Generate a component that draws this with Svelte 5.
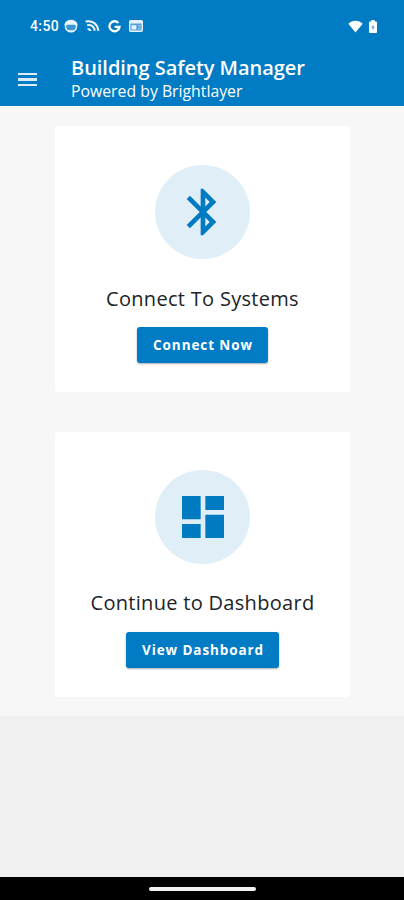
<script>
  const cards = [
    {
      title: 'Connect To Systems',
      action: 'Connect Now',
      kind: 'connect',
      icon: 'M17.71 7.71 12 2h-1v7.59L6.41 5 5 6.41 10.59 12 5 17.59 6.41 19 11 14.41V22h1l5.71-5.71-4.3-4.29 4.3-4.29zM13 5.83l1.88 1.88L13 9.59V5.83zm1.88 10.46L13 18.17v-3.76l1.88 1.88z',
    },
    {
      title: 'Continue to Dashboard',
      action: 'View Dashboard',
      kind: 'dashboard',
      icon: 'M3 13h8V3H3v10zm0 8h8v-6H3v6zm10 0h8V11h-8v10zm0-18v6h8V3h-8z',
    },
  ];
</script>

<div class="screen">
  <header>
    <div class="status">
      <span class="time">4:50</span>
      <svg class="face" width="14" height="14" viewBox="0 0 14 14">
        <circle cx="7" cy="7.2" r="5.6" fill="#3b94d3" stroke="#e9f3fc" stroke-width="1.4" />
        <path d="M.4 5.4C2-.8 12-.8 13.6 5.4L12.600 7.600 10.800 5.800H3.200L1.400 7.600z" fill="#e9f3fc" />
        <path d="M4 11.200h6L9 13H5z" fill="#e9f3fc" />
      </svg>
      <svg class="feed" width="15" height="12" viewBox="0 0 15 12" fill="none" stroke="#f1f7fd" stroke-width="2">
        <path d="M.6 1.500C7.500 0 12.500 4 13.400 10.800" />
        <path d="M2.200 5.200C6.500 4.400 9 6.500 9.800 10.800" />
        <path d="M2.600 9C4 8.400 5.600 9 6 10.600H4.600z" fill="#f1f7fd" stroke-width="1" />
      </svg>
      <svg class="google" width="13" height="13" viewBox="0 0 13 13" fill="none" stroke="#fff" stroke-width="2.4">
        <path d="M10.300 3A5 5 0 1 0 11.500 6.900H6.600" />
      </svg>
      <svg class="news" width="14" height="12" viewBox="0 0 14 12">
        <rect x=".7" y=".7" width="12.600" height="10.600" rx="1" fill="#4f9fd8" stroke="#e6f1fb" stroke-width="1.400" />
        <path d="M1 1h12v2.500H1z" fill="#e6f1fb" />
        <path d="M2.500 5.200h4.800v4.300H2.500z" fill="#e6f1fb" />
        <path d="M8.800 5.800h3M8.800 8.800h3" stroke="#b8d8f0" />
      </svg>
      <span class="spacer"></span>
      <svg class="wifi" width="15" height="13" viewBox="0 0 15 13">
        <path d="M.3 3.800C4.300-.2 10.700-.2 14.700 3.800L7.500 12.500z" fill="#fff" />
      </svg>
      <svg class="battery" width="8" height="13" viewBox="0 0 8 13">
        <path d="M2.300 0h3.400v1.400H7a1 1 0 0 1 1 1V12a1 1 0 0 1-1 1H1a1 1 0 0 1-1-1V2.400a1 1 0 0 1 1-1h1.300z" fill="#fff" />
        <path d="M4.500 4.200 2.300 7.800h1.400v2.600l2-3.600H4.400z" fill="#5a9fd6" />
      </svg>
    </div>
    <div class="toolbar">
      <button class="menu" aria-label="Menu"><i></i><i></i><i></i></button>
      <div class="titles">
        <h1>Building Safety Manager</h1>
        <p>Powered by Brightlayer</p>
      </div>
    </div>
  </header>

  <main>
    {#each cards as card}
      <section class={card.kind}>
        <div class="circle">
          <svg width="56" height="56" viewBox="0 0 24 24"><path d={card.icon} fill="#007bc1" /></svg>
        </div>
        <h2>{card.title}</h2>
        <button class="action">{card.action}</button>
      </section>
    {/each}
  </main>

  <footer><span></span></footer>
</div>

<style>
  .screen {
    width: 404px;
    height: 900px;
    display: flex;
    flex-direction: column;
    overflow: hidden;
    background: #f0f0f0;
    font-family: "Open Sans", "Noto Sans", sans-serif;
  }
  h1, h2, p { margin: 0; white-space: nowrap; }
  button { border: 0; padding: 0; font-family: inherit; }
  svg { display: block; flex: none; }
  header { height: 106px; flex: none; background: #007bc4; color: #fff; }
  .status {
    height: 52px;
    box-sizing: border-box;
    padding: 0 27px 0 30px;
    display: flex;
    align-items: center;
  }
  .time { width: 34px; font: 500 14px/20px Roboto, sans-serif; letter-spacing: .4px; }
  .feed { margin-left: 7px; }
  .google { margin-left: 8px; }
  .news { margin-left: 8px; }
  .spacer { flex: 1; }
  .battery { margin-left: 6px; }
  .toolbar { height: 53px; display: flex; align-items: center; padding-left: 18px; }
  .menu {
    width: 19px;
    height: 13px;
    margin-top: 2px;
    display: flex;
    flex-direction: column;
    justify-content: space-between;
    background: none;
  }
  .menu i { height: 2.4px; background: #dcedf9; }
  .titles { margin-left: 34px; height: 50px; }
  h1 { font-size: 20px; line-height: 27px; font-weight: 600; letter-spacing: -.04px; }
  p { font-size: 15.8px; line-height: 21px; }
  main {
    height: 610px;
    flex: none;
    box-sizing: border-box;
    padding: 20px 54px 19px 55px;
    display: flex;
    flex-direction: column;
    gap: 40px;
    background: #f7f7f7;
  }
  section {
    height: 266px;
    box-sizing: border-box;
    padding-top: 39px;
    display: flex;
    flex-direction: column;
    align-items: center;
    background: #fff;
    border-radius: 3px;
  }
  section.dashboard { height: 265px; padding-top: 38px; }
  .circle {
    width: 95px;
    height: 94px;
    border-radius: 50%;
    display: flex;
    align-items: center;
    justify-content: center;
    background: #e0eef8;
  }
  h2 {
    margin-top: 25px;
    height: 28px;
    line-height: 28px;
    font-size: 20px;
    font-weight: 400;
    letter-spacing: .3px;
    color: #1b2428;
  }
  .connect h2 { padding-top: 1px; height: 27px; }
  .action {
    width: 131px;
    height: 36px;
    margin-top: 15px;
    border-radius: 3px;
    background: #007bc4;
    color: #fff;
    font-size: 13.5px;
    font-weight: 700;
    letter-spacing: .9px;
    text-indent: 1px;
    box-shadow: 0 1px 2px #0005;
  }
  .dashboard .action { width: 153px; }
  footer {
    height: 23px;
    margin-top: auto;
    display: flex;
    align-items: center;
    justify-content: center;
    background: #000;
  }
  footer span { width: 107px; height: 4px; border-radius: 2px; background: #f2f2f2; }
</style>
